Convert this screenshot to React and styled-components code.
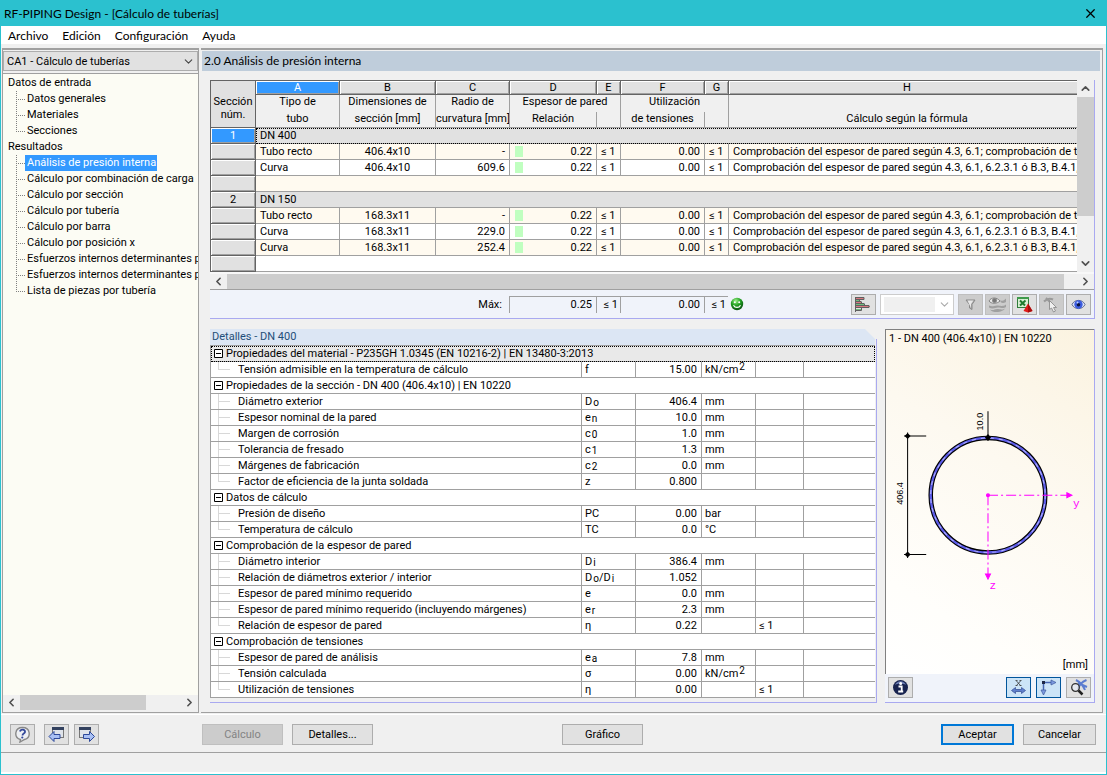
import React from "react";
import styled, { createGlobalStyle, css } from "styled-components";
import { ChevronDown, ChevronLeft, ChevronRight, ChevronUp, X } from "lucide-react";

const GlobalStyle = createGlobalStyle`
  * {
    box-sizing: border-box;
  }
  body {
    margin: 0;
    background: #f0f0f0;
    color: #000;
    font-family: "Roboto", "Liberation Sans", sans-serif;
    font-size: 11px;
  }
  button, select {
    font: inherit;
    color: inherit;
  }
`;

const captionFont = css`
  font-family: "Lato", "Noto Sans", sans-serif;
  font-size: 12px;
  font-weight: 400;
`;

/* ---------- window ---------- */

const Window = styled.div`
  min-height: 100vh;
  display: flex;
  flex-direction: column;
  border: 1px solid #2bc1cf;
  background: #f0f0f0;
`;

const TitleBar = styled.header`
  height: 25px;
  display: flex;
  align-items: center;
  justify-content: space-between;
  padding: 0 8px 0 3px;
  background: #2bc1cf;
  h1 {
    ${captionFont}
    margin: 0;
  }
  button {
    display: flex;
    padding: 0;
    border: 0;
    background: none;
  }
`;

const MenuBar = styled.nav`
  ${captionFont}
  height: 18px;
  display: flex;
  align-items: center;
  gap: 14px;
  padding: 2px 0 0 7px;
  background: #fff;
  button {
    padding: 0;
    border: 0;
    background: none;
    line-height: 16px;
  }
`;

const Main = styled.main`
  flex: 1;
  display: grid;
  grid-template-columns: 197px minmax(0, 1fr);
  gap: 2px;
  padding: 4px 3px 1px 1px;
`;

/* ---------- navigator ---------- */

const Sidebar = styled.aside`
  display: flex;
  flex-direction: column;
  min-width: 0;
  padding-bottom: 2px;
  border: 1px solid #a0a0a0;
  border-top-width: 2px;
  background: #f0f0f0;
`;

const CaseSelect = styled.div`
  position: relative;
  margin-top: 1px;
  padding-bottom: 2px;
  border-bottom: 1px solid #a0a0a0;
  select {
    display: block;
    width: 100%;
    height: 20px;
    padding: 0 20px 0 3px;
    border: 1px solid #adadad;
    border-radius: 0;
    background: #e1e1e1;
    appearance: none;
  }
  svg {
    position: absolute;
    right: 3px;
    top: 4px;
    pointer-events: none;
  }
`;

const Tree = styled.ul`
  flex: 1;
  margin: 0;
  padding: 1px 0 0;
  overflow: hidden;
  list-style: none;
  background: #fcfcf4;
`;

const TreeRow = styled.li`
  height: 16px;
  display: flex;
  align-items: center;
  padding-left: ${(p) => (p.$root ? 3 : 13)}px;
  white-space: nowrap;
  a {
    padding: 0 1px 0 2px;
    line-height: 16px;
    color: ${(p) => (p.$active ? "#fff" : "#000")};
    background: ${(p) => (p.$active ? "#3399ff" : "none")};
    text-decoration: none;
  }
`;

const Branch = styled.span`
  flex: none;
  align-self: flex-start;
  width: 9px;
  height: ${(p) => (p.$last ? 9 : 16)}px;
  background:
    repeating-linear-gradient(90deg, #808080 0 1px, transparent 1px 2px) 0 8px / 100% 1px no-repeat,
    repeating-linear-gradient(180deg, #808080 0 1px, transparent 1px 2px) 0 0 / 1px 100% no-repeat;
`;

/* ---------- scroll bars ---------- */

const ScrollBar = styled.div`
  flex: none;
  display: flex;
  flex-direction: ${(p) => (p.$vertical ? "column" : "row")};
  ${(p) => (p.$vertical ? "width: 17px;" : "height: 15px;")}
  background: #f0f0f0;
  button {
    flex: none;
    width: 17px;
    height: ${(p) => (p.$vertical ? 17 : 15)}px;
    display: flex;
    align-items: center;
    justify-content: center;
    padding: 0;
    border: 0;
    background: none;
    color: #505050;
  }
`;

const Track = styled.div`
  flex: 1;
  display: flex;
  flex-direction: ${(p) => (p.$vertical ? "column" : "row")};
`;

const Thumb = styled.div`
  flex: 0 0 ${(p) => p.$size};
  background: #cdcdcd;
`;

/* ---------- work area ---------- */

const Panel = styled.section`
  display: flex;
  flex-direction: column;
  min-width: 0;
  border: solid #a0a0a0;
  border-width: 2px 1px 1px 0;
`;

const PanelTitle = styled.h2`
  ${captionFont}
  height: 20px;
  margin: 1px 2px 0 1px;
  padding-left: 2px;
  background: #bfcddb;
  line-height: 20px;
`;

const Content = styled.div`
  flex: 1;
  display: flex;
  flex-direction: column;
  gap: 10px;
  padding: 9px 7px 9px 9px;
`;

const Results = styled.div`
  border: solid #a9a9f0;
  border-width: 0 1px 1px 0;
`;

const ResultsTop = styled.div`
  display: flex;
  padding-bottom: 2px;
  background: #f8f8f8;
`;

const GridView = styled.div`
  flex: 1;
  min-width: 0;
  overflow: hidden;
  border: solid #646464;
  border-width: 1px 0 0 1px;
`;

const Grid = styled.table`
  width: calc(100% + 9px);
  table-layout: fixed;
  border-collapse: separate;
  border-spacing: 0;
  background: #fff;
  th, td {
    height: 16px;
    padding: 0 4px;
    border: solid #a0a0a0;
    border-width: 0 1px 1px 0;
    font-weight: 400;
    line-height: 15px;
    white-space: nowrap;
    overflow: hidden;
  }
`;

const raised = css`
  border-color: #646464 !important;
  box-shadow: inset 1px 1px #fff, inset -1px -1px #a0a0a0;
  background: #e1e1e1;
`;

const Letter = styled.th`
  ${raised}
  height: 14px !important;
  line-height: 13px !important;
  ${(p) =>
    p.$active &&
    css`
      background: #3399ff;
      color: #fff;
    `}
`;

const Corner = styled.th`
  background: #e1e1e1;
  border-color: #646464 !important;
  padding: 8px 0 0 !important;
  line-height: 13px !important;
  white-space: normal !important;
`;

const Head = styled.th`
  padding: 0 !important;
  background: #f0f0f0;
  vertical-align: top;
  height: ${(p) => (p.$upper ? 17 : 16)}px !important;
  line-height: 14px !important;
  ${(p) => p.$upper && "border-bottom: 0 !important;"}
`;

const RowHead = styled.th`
  ${raised}
  ${(p) =>
    p.$active &&
    css`
      background: #3399ff;
      color: #fff;
    `}
`;

const Cell = styled.td`
  text-align: ${(p) => p.$align || "left"};
  background: ${(p) => (p.$alt ? "#fffaf0" : "#fff")};
`;

const SectionCell = styled.td`
  background: #e1e1e1;
  ${(p) => p.$focus && "outline: 1px dotted #000; outline-offset: -1px;"}
`;

const Ratio = styled.span`
  display: flex;
  align-items: center;
  justify-content: space-between;
  padding-left: 1px;
  &::before {
    content: "";
    width: 8px;
    height: 11px;
    background: #c0ffc0;
  }
`;

const ResultsBar = styled.div`
  height: 29px;
  display: flex;
  align-items: center;
  justify-content: space-between;
  padding-right: 3px;
  border-top: 1px solid #a0a0a0;
  background: #f0f3fa;
`;

const MaxLine = styled.div`
  display: flex;
  align-items: center;
  span {
    width: 293px;
    text-align: right;
    padding-right: 1px;
    margin-right: 6px;
  }
  svg {
    margin-left: 2px;
  }
`;

const MaxBox = styled.output`
  width: ${(p) => p.$width}px;
  height: 17px;
  padding-right: ${(p) => (p.$width > 30 ? 4 : 2)}px;
  border: solid #a0a0a0;
  border-width: 1px 0 0 1px;
  text-align: right;
  line-height: 16px;
`;

const Tools = styled.div`
  display: flex;
  gap: 2px;
`;

const IconButton = styled.button`
  width: 25px;
  height: 21px;
  display: flex;
  align-items: center;
  justify-content: center;
  padding: 0;
  border: 1px solid ${(p) => (p.$pressed ? "#00559b" : "#adadad")};
  background: ${(p) => (p.$pressed ? "#cce4f7" : "#e1e1e1")};
  &:disabled {
    border-color: #bfbfbf;
    background: #cccccc;
  }
`;

const RangeSelect = styled.div`
  position: relative;
  margin: 0 2px;
  select {
    display: block;
    width: 74px;
    height: 21px;
    border: 1px solid #ccc;
    border-radius: 0;
    background: linear-gradient(#f0f0f0, #f0f0f0) 3px 2px / 51px 15px no-repeat #fff;
    appearance: none;
    opacity: 1;
  }
  svg {
    position: absolute;
    right: 3px;
    top: 4px;
    pointer-events: none;
  }
`;

/* ---------- details ---------- */

const Lower = styled.div`
  flex: 1;
  display: grid;
  grid-template-columns: minmax(0, 1fr) 210px;
  gap: 8px;
`;

const Details = styled.div`
  padding-right: 2px;
  border-bottom: 1px solid #a9a9f0;
  background: linear-gradient(#a9a9f0, #a9a9f0) right bottom / 1px calc(100% - 10px) no-repeat;
`;

const DetailsTitle = styled.h3`
  height: 16px;
  margin: 0;
  padding-left: 2px;
  background: #dce6f4;
  clip-path: polygon(0 0, calc(100% - 10px) 0, 100% 10px, 100% 100%, 0 100%);
  color: #1f4e79;
  font-size: 11px;
  font-weight: 400;
  line-height: 16px;
`;

const DetailTable = styled.table`
  width: 100%;
  table-layout: fixed;
  border-collapse: separate;
  border-spacing: 0;
  border: solid #a0a0a0;
  border-width: 1px 0 0 1px;
  background: #fff;
  th, td {
    height: 16px;
    padding: 0 4px 0 3px;
    border: solid #a0a0a0;
    border-width: 0 1px 1px 0;
    font-weight: 400;
    text-align: left;
    line-height: 13px;
    white-space: nowrap;
    overflow: hidden;
  }
  th:last-child, td:last-child {
    border-right: 0;
  }
  sub, sup {
    font-size: 10px;
    line-height: 0;
    margin-left: 1px;
  }
  sub {
    vertical-align: -1px;
  }
  sup {
    vertical-align: 3px;
  }
`;

const GroupHead = styled.th`
  ${(p) => p.$focus && "background: #e9e9e9; outline: 1px dotted #000; outline-offset: -1px;"}
  button {
    display: flex;
    align-items: center;
    gap: 3px;
    padding: 0;
    border: 0;
    background: none;
  }
`;

const NameCell = styled.th`
  div {
    display: flex;
    align-items: center;
    padding-left: 4px;
    gap: 8px;
  }
`;

const Twig = styled.span`
  width: 12px;
  height: 15px;
  background:
    linear-gradient(#d8d8d8, #d8d8d8) 0 7px / 12px 1px no-repeat,
    linear-gradient(#d8d8d8, #d8d8d8) 0 0 / 1px ${(p) => (p.$last ? "8px" : "100%")} no-repeat;
`;

const NumCell = styled.td`
  text-align: right !important;
`;

/* ---------- preview ---------- */

const Preview = styled.figure`
  display: flex;
  flex-direction: column;
  margin: 0;
  border: solid #a9a9f0;
  border-width: 0 1px 1px 0;
`;

const Drawing = styled.div`
  flex: 1;
  display: flex;
  flex-direction: column;
  border: solid #808080;
  border-width: 1px 0 0 1px;
  background: linear-gradient(212deg, #fbf3e0 0%, #fdf9f0 40%, #fffefb 80%, #fff 100%);
  figcaption {
    padding-left: 3px;
    line-height: 17px;
  }
  svg {
    flex: 1;
    width: 100%;
  }
  p {
    margin: 0;
    padding-right: 6px;
    text-align: right;
    line-height: 18px;
  }
`;

const PreviewBar = styled.div`
  height: 28px;
  display: flex;
  align-items: center;
  gap: 5px;
  padding: 0 3px 1px;
  background: #f0f3fa;
  button:first-child {
    margin-right: auto;
  }
`;

/* ---------- footer ---------- */

const Footer = styled.footer`
  height: 39px;
  display: flex;
  align-items: center;
  padding: 2px 10px 0 9px;
  border-top: 1px solid #fff;
  border-bottom: 1px solid #a0a0a0;
`;

const NavButtons = styled.div`
  width: 192px;
  display: flex;
  gap: 5px;
  button:first-child {
    margin-right: 4px;
  }
`;

const Push = styled.button`
  width: ${(p) => (p.$wide ? 81 : 73)}px;
  height: 21px;
  margin-left: ${(p) => (p.$spaced ? 9 : 0)}px;
  padding: 0;
  border: ${(p) => (p.$primary ? "2px solid #0078d7" : "1px solid #adadad")};
  background: #e1e1e1;
  &:disabled {
    border-color: #bfbfbf;
    background: #ccc;
    color: #838383;
  }
`;

const Spacer = styled.div`
  flex: ${(p) => p.$grow};
`;

const StatusBar = styled.div`
  height: 21px;
  border-bottom: 2px solid #fff;
`;

/* ---------- icons ---------- */

const BarsIcon = () => (
  <svg width="19" height="17" viewBox="0 0 19 17">
    <g strokeWidth="1">
      <path d="M2 2.500h8M2 6.500h5M2 10.500h14" stroke="#d87880" />
      <path d="M2 4.500h3M2 8.500h8M2 13.500h5" stroke="#6fc07c" />
      <path d="M1.500 1v15M2 1.500h8v2M5.500 3.500v2M7.500 5.500v2M10.500 7.500v2M2 3.500h8M2 5.500h5M2 7.500h8M2 9.500h8M10 9.500h5v2H2M2 14.500h5.500v-3" stroke="#606060" fill="none" />
    </g>
  </svg>
);

const FilterIcon = () => (
  <svg width="15" height="15" viewBox="0 0 15 15">
    <path d="M3 3h9L9 7.500v5L6.500 11V7.500z" fill="#a8a8a8" stroke="#8a8a8a" />
    <path d="M4.500 3.500h6L8 7v4z" fill="#e8e8e8" />
  </svg>
);

const EyeWavesIcon = () => (
  <svg width="19" height="17" viewBox="0 0 19 17" fill="none" stroke="#858585">
    <path d="M1 9.500c4 2 5-.5 9 0s5 1 8-1V11c-3 2-5 .5-8 .5s-5 2-9 0z" fill="#a0a0a0" stroke="none" />
    <path d="M2 13.500c4 1.500 4-.8 8-.5s4 1 7-.5c-2 4-12 5-15 1z" fill="#a0a0a0" stroke="none" />
    <path d="M12.500 4c2 2 4 0 5.500-1.500V6C15 7.500 14 7 12.500 6z" fill="#a0a0a0" stroke="none" />
    <path d="M1 5C3 1 9 1 12 5 9 8 3 8 1 5z" fill="#e8e8e8" />
    <circle cx="6.500" cy="4.500" r="2" fill="#777" />
  </svg>
);

const ExcelIcon = () => (
  <svg width="19" height="19" viewBox="0 0 19 19">
    <rect x="2.500" y="2.500" width="11" height="10" fill="#d8efd4" stroke="#2f7d3b" />
    <path d="M2 2h12v2H2z" fill="#3f9a4b" />
    <path d="M5 5.500l5 5M10.500 5.500l-5.500 5" stroke="#1f7a2f" strokeWidth="2" />
    <path d="M13 8.500l4.500 7.500L13 17.500 8.500 16z" fill="#e01b1b" />
    <path d="M13 8.500l4.500 7.500L13 17.500z" fill="#a80d0d" />
  </svg>
);

const PickIcon = () => (
  <svg width="17" height="17" viewBox="0 0 17 17">
    <path d="M1 5.500c3-3 6-3.500 9-2M3 2l5 5" stroke="#9a9a9a" strokeWidth="2" fill="none" />
    <path d="M6.500 4.500v9l2-1.500 2 4 2-1-2-3.500h3z" fill="#f0f0f0" stroke="#8c8c8c" strokeWidth="0.900" />
  </svg>
);

const EyeIcon = () => (
  <svg width="17" height="13" viewBox="0 0 17 13">
    <path d="M2 6.500C4.500 1 12.500 1 15 6.500 12.500 12 4.500 12 2 6.500z" fill="#e4eafa" stroke="#5a658a" />
    <circle cx="8.500" cy="6.500" r="4.200" fill="#3c5ce0" />
    <circle cx="8.500" cy="6.800" r="1.800" fill="#0a1440" />
    <circle cx="7.500" cy="4.600" r="1" fill="#bcd0ff" />
  </svg>
);

const SmileIcon = () => (
  <svg width="14" height="14" viewBox="0 0 14 14">
    <defs>
      <radialGradient id="smile" cx="0.400" cy="0.250" r="0.750">
        <stop offset="0" stopColor="#9df08a" />
        <stop offset="0.500" stopColor="#22a022" />
        <stop offset="1" stopColor="#0a5210" />
      </radialGradient>
    </defs>
    <circle cx="7" cy="7" r="6.200" fill="url(#smile)" />
    <circle cx="4.800" cy="5.200" r="1" fill="#fff" />
    <circle cx="9.200" cy="5.200" r="1" fill="#fff" />
    <path d="M3.500 8.200c1.500 3 5.500 3 7 0" fill="none" stroke="#fff" strokeWidth="1.200" />
  </svg>
);

const InfoIcon = () => (
  <svg width="17" height="17" viewBox="0 0 17 17">
    <circle cx="8.500" cy="8.500" r="7.500" fill="#17234f" />
    <path d="M3 6c2-5 9-5 11 0-3-2-8-2-11 0z" fill="#6b7db4" />
    <circle cx="8.700" cy="4.500" r="1.500" fill="#fff" />
    <path d="M6.500 7.500h3.200v5M6.200 12.500h5" stroke="#fff" strokeWidth="1.800" fill="none" />
  </svg>
);

const DimXIcon = () => (
  <svg width="17" height="17" viewBox="0 0 17 17">
    <path d="M6.500 2l4 4.500M10.500 2l-4 4.500M5.500 1.500h2M9.500 1.500h2M5.500 6.500h2M9.500 6.500h2" stroke="#333" strokeWidth="0.800" />
    <path d="M1.500 11.500l4-3v2h6v-2l4 3-4 3v-2h-6v2z" fill="#5f80cd" stroke="#3c579c" strokeWidth="0.800" />
  </svg>
);

const AxesIcon = () => (
  <svg width="17" height="17" viewBox="0 0 17 17">
    <path d="M4 3.500h9M3.500 3v10" stroke="#4767b4" strokeWidth="1.500" />
    <path d="M11 1l5 2.500L11 6zM1 11l2.500 5L6 11z" fill="#7d9be0" stroke="#3c579c" strokeWidth="0.700" />
    <rect x="2" y="2" width="3" height="3" fill="#1c2746" />
  </svg>
);

const ZoomIcon = () => (
  <svg width="18" height="17" viewBox="0 0 18 17">
    <path d="M6 1c4 2 7 5 9 10M16.500 1C12 3 9 6 8 10M8 4l9 4" stroke="#5b7cd0" strokeWidth="2" fill="none" />
    <circle cx="5.500" cy="8.500" r="3.800" fill="#e8ecf4" fillOpacity="0.800" stroke="#333" strokeWidth="1.300" />
    <path d="M8.500 11.500l4 4" stroke="#222" strokeWidth="2.500" />
  </svg>
);

const HelpIcon = () => (
  <svg width="17" height="17" viewBox="0 0 17 17">
    <path d="M8.500 1.500c8 0 9 10 2 12L6 16l.5-2.500c-7-2-6-12 2-12z" fill="#eef0f4" stroke="#888" strokeWidth="1.400" />
    <path d="M6 5.500c.5-2.500 5.500-2.500 5 .5-.3 1.700-2.500 1.500-2.500 3.500" fill="none" stroke="#33489a" strokeWidth="1.800" />
    <circle cx="8.300" cy="11.500" r="1.100" fill="#33489a" />
  </svg>
);

const StepIcon = ({ back }) => (
  <svg width="18" height="17" viewBox="0 0 18 17">
    <rect x={back ? 4.5 : 1.5} y="1.500" width="11" height="10" fill="#dfe3ea" stroke="#777" />
    <path d={back ? "M4 1h12v3H4z" : "M1 1h12v3H1z"} fill="#33415f" />
    <path
      d={back ? "M1 10.500l5-5v3h6v4H6v3z" : "M16.500 10.500l-5-5v3h-6v4h6v3z"}
      fill="#a9c0f4"
      stroke="#2d489a"
    />
  </svg>
);

const BoxMinus = () => (
  <svg width="9" height="9" viewBox="0 0 9 9">
    <path d="M.5.5h8v8h-8zM2 4.500h5" fill="#fff" stroke="#000" />
  </svg>
);

const PipeDrawing = () => (
  <svg viewBox="886 347 207 308" fontFamily="Liberation Sans, sans-serif" fontSize="9">
    <circle cx="987.500" cy="494.500" r="57" fill="none" stroke="#000" strokeWidth="4.500" />
    <circle cx="987.500" cy="494.500" r="57" fill="none" stroke="#5c5ce8" strokeWidth="2.300" />
    <circle cx="987.500" cy="494.500" r="57" fill="none" stroke="#b4b4ff" strokeWidth="1" strokeDasharray="4 5" />
    <path d="M907.500 432v125M904 435.500h22M904 553.500h22M987.500 411v29" stroke="#000" />
    <path d="M907.500 432.500l3 3-3 3-3-3zM907.500 550.500l3 3-3 3-3-3zM987.500 433.500l3 3.500-3 3.500-3-3.500z" />
    <text transform="translate(903 504) rotate(-90)">406.4</text>
    <text transform="translate(983 430) rotate(-90)">10.0</text>
    <g stroke="#f0f" fill="#f0f">
      <path d="M987.500 494.500h79M987.500 494.500v80" strokeDasharray="10 3 2 3" />
      <path d="M1066 492l5 2.500-5 2.500zM985 573h5l-2.500 5z" />
      <circle cx="987.500" cy="494.500" r="1.500" />
    </g>
    <g fill="#f0f" fontFamily="Liberation Mono, monospace" fontSize="11">
      <text x="1072" y="506">y</text>
      <text x="989" y="588">z</text>
    </g>
  </svg>
);

/* ---------- data ---------- */

const navigation = [
  { label: "Datos de entrada", items: ["Datos generales", "Materiales", "Secciones"] },
  {
    label: "Resultados",
    items: [
      "Análisis de presión interna",
      "Cálculo por combinación de carga",
      "Cálculo por sección",
      "Cálculo por tubería",
      "Cálculo por barra",
      "Cálculo por posición x",
      "Esfuerzos internos determinantes p",
      "Esfuerzos internos determinantes p",
      "Lista de piezas por tubería",
    ],
  },
];

const straight = "Comprobación del espesor de pared según 4.3, 6.1; comprobación de ter";
const bend = "Comprobación del espesor de pared según 4.3, 6.1, 6.2.3.1 ó B.3, B.4.1,";

const rows = [
  { no: 1, section: "DN 400" },
  { type: "Tubo recto", size: "406.4x10", radius: "-", formula: straight, alt: true },
  { type: "Curva", size: "406.4x10", radius: "609.6", formula: bend },
  { empty: true, alt: true },
  { no: 2, section: "DN 150" },
  { type: "Tubo recto", size: "168.3x11", radius: "-", formula: straight, alt: true },
  { type: "Curva", size: "168.3x11", radius: "229.0", formula: bend },
  { type: "Curva", size: "168.3x11", radius: "252.4", formula: bend, alt: true },
  { empty: true },
];

const sub = (a, b) => (
  <>
    {a}
    <sub>{b}</sub>
  </>
);

const stress = (
  <>
    kN/cm<sup>2</sup>
  </>
);

const details = [
  {
    title: "Propiedades del material - P235GH 1.0345 (EN 10216-2) | EN 13480-3:2013",
    rows: [["Tensión admisible en la temperatura de cálculo", "f", "15.00", stress]],
  },
  {
    title: "Propiedades de la sección - DN 400 (406.4x10) | EN 10220",
    rows: [
      ["Diámetro exterior", sub("D", "o"), "406.4", "mm"],
      ["Espesor nominal de la pared", sub("e", "n"), "10.0", "mm"],
      ["Margen de corrosión", sub("c", "0"), "1.0", "mm"],
      ["Tolerancia de fresado", sub("c", "1"), "1.3", "mm"],
      ["Márgenes de fabricación", sub("c", "2"), "0.0", "mm"],
      ["Factor de eficiencia de la junta soldada", "z", "0.800"],
    ],
  },
  {
    title: "Datos de cálculo",
    rows: [
      ["Presión de diseño", "PC", "0.00", "bar"],
      ["Temperatura de cálculo", "TC", "0.0", "°C"],
    ],
  },
  {
    title: "Comprobación de la espesor de pared",
    rows: [
      ["Diámetro interior", sub("D", "i"), "386.4", "mm"],
      ["Relación de diámetros exterior / interior", <>{sub("D", "o")}/{sub("D", "i")}</>, "1.052"],
      ["Espesor de pared mínimo requerido", "e", "0.0", "mm"],
      ["Espesor de pared mínimo requerido (incluyendo márgenes)", sub("e", "r"), "2.3", "mm"],
      ["Relación de espesor de pared", "η", "0.22", "", "≤ 1"],
    ],
  },
  {
    title: "Comprobación de tensiones",
    rows: [
      ["Espesor de pared de análisis", sub("e", "a"), "7.8", "mm"],
      ["Tensión calculada", "σ", "0.00", stress],
      ["Utilización de tensiones", "η", "0.00", "", "≤ 1"],
    ],
  },
];

/* ---------- parts ---------- */

const arrow = { size: 13, strokeWidth: 3 };

const Navigator = () => (
  <Sidebar>
    <CaseSelect>
      <select aria-label="Caso">
        <option>CA1 - Cálculo de tuberías</option>
      </select>
      <ChevronDown size={13} strokeWidth={2} color="#444" />
    </CaseSelect>
    <Tree>
      {navigation.map((group) => (
        <React.Fragment key={group.label}>
          <TreeRow $root>
            <a href="#grupo">{group.label}</a>
          </TreeRow>
          {group.items.map((item, i) => (
            <TreeRow key={i} $active={item === "Análisis de presión interna"}>
              <Branch $last={i === group.items.length - 1} />
              <a href="#tabla">{item}</a>
            </TreeRow>
          ))}
        </React.Fragment>
      ))}
    </Tree>
    <ScrollBar>
      <button aria-label="Izquierda">
        <ChevronLeft {...arrow} />
      </button>
      <Track>
        <Thumb $size="78%" />
      </Track>
      <button aria-label="Derecha">
        <ChevronRight {...arrow} />
      </button>
    </ScrollBar>
  </Sidebar>
);

const ResultGrid = () => (
  <Grid>
    <colgroup>
      {[45, 84, 96, 74, 87, 24, 84, 24].map((w, i) => (
        <col key={i} width={w} />
      ))}
      <col />
    </colgroup>
    <thead>
      <tr>
        <Corner rowSpan={3}>Sección núm.</Corner>
        {"ABCDEFGH".split("").map((l) => (
          <Letter key={l} $active={l === "A"}>
            {l}
          </Letter>
        ))}
      </tr>
      <tr>
        <Head $upper>Tipo de</Head>
        <Head $upper>Dimensiones de</Head>
        <Head $upper>Radio de</Head>
        <Head $upper colSpan={2}>Espesor de pared</Head>
        <Head $upper colSpan={2}>Utilización</Head>
        <Head $upper />
      </tr>
      <tr>
        <Head>tubo</Head>
        <Head>sección [mm]</Head>
        <Head>curvatura [mm]</Head>
        <Head>Relación</Head>
        <Head />
        <Head>de tensiones</Head>
        <Head />
        <Head>Cálculo según la fórmula</Head>
      </tr>
    </thead>
    <tbody>
      {rows.map((row, i) => (
        <tr key={i}>
          <RowHead $active={row.no === 1}>{row.no}</RowHead>
          {row.section && (
            <SectionCell colSpan={8} $focus={row.no === 1}>
              {row.section}
            </SectionCell>
          )}
          {row.empty && <Cell colSpan={8} $alt={row.alt} />}
          {row.type && (
            <>
              <Cell $alt={row.alt}>{row.type}</Cell>
              <Cell $alt={row.alt} $align="center">{row.size}</Cell>
              <Cell $alt={row.alt} $align="right">{row.radius}</Cell>
              <Cell $alt={row.alt}>
                <Ratio>0.22</Ratio>
              </Cell>
              <Cell $alt={row.alt}>≤ 1</Cell>
              <Cell $alt={row.alt} $align="right">0.00</Cell>
              <Cell $alt={row.alt}>≤ 1</Cell>
              <Cell $alt={row.alt}>{row.formula}</Cell>
            </>
          )}
        </tr>
      ))}
    </tbody>
  </Grid>
);

const ResultTools = () => (
  <ResultsBar>
    <MaxLine>
      <span>Máx:</span>
      <MaxBox $width={87}>0.25</MaxBox>
      <MaxBox $width={24}>≤ 1</MaxBox>
      <MaxBox $width={84}>0.00</MaxBox>
      <MaxBox $width={24}>≤ 1</MaxBox>
      <SmileIcon />
    </MaxLine>
    <Tools>
      <IconButton aria-label="Barras"><BarsIcon /></IconButton>
      <RangeSelect>
        <select aria-label="Rango" disabled />
        <ChevronDown size={13} strokeWidth={2} color="#aaa" />
      </RangeSelect>
      <IconButton disabled aria-label="Filtro"><FilterIcon /></IconButton>
      <IconButton disabled aria-label="Vista"><EyeWavesIcon /></IconButton>
      <IconButton aria-label="Exportar"><ExcelIcon /></IconButton>
      <IconButton disabled aria-label="Seleccionar"><PickIcon /></IconButton>
      <IconButton aria-label="Ver"><EyeIcon /></IconButton>
    </Tools>
  </ResultsBar>
);

const DetailGrid = () => (
  <DetailTable>
    <colgroup>
      <col />
      {[54, 66, 54, 48, 71].map((w, i) => (
        <col key={i} width={w} />
      ))}
    </colgroup>
    {details.map((group, g) => (
      <tbody key={group.title}>
        <tr>
          <GroupHead colSpan={6} $focus={g === 0}>
            <button>
              <BoxMinus />
              {group.title}
            </button>
          </GroupHead>
        </tr>
        {group.rows.map(([name, symbol, value, unit, limit], i) => (
          <tr key={name}>
            <NameCell>
              <div>
                <Twig $last={i === group.rows.length - 1} />
                {name}
              </div>
            </NameCell>
            <td>{symbol}</td>
            <NumCell>{value}</NumCell>
            <td>{unit}</td>
            <td>{limit}</td>
            <td />
          </tr>
        ))}
      </tbody>
    ))}
  </DetailTable>
);

const App = () => (
  <>
    <GlobalStyle />
    <Window>
      <TitleBar>
        <h1>RF-PIPING Design - [Cálculo de tuberías]</h1>
        <button aria-label="Cerrar">
          <X size={15} strokeWidth={2} />
        </button>
      </TitleBar>
      <MenuBar>
        <button>Archivo</button>
        <button>Edición</button>
        <button>Configuración</button>
        <button>Ayuda</button>
      </MenuBar>
      <Main>
        <Navigator />
        <Panel>
          <PanelTitle>2.0 Análisis de presión interna</PanelTitle>
          <Content>
            <Results>
              <ResultsTop>
                <GridView>
                  <ResultGrid />
                </GridView>
                <ScrollBar $vertical>
                  <button aria-label="Arriba">
                    <ChevronUp {...arrow} />
                  </button>
                  <Track $vertical>
                    <Thumb $size="75%" />
                  </Track>
                  <button aria-label="Abajo">
                    <ChevronDown {...arrow} />
                  </button>
                </ScrollBar>
              </ResultsTop>
              <ScrollBar>
                <button aria-label="Izquierda">
                  <ChevronLeft {...arrow} />
                </button>
                <Track>
                  <Thumb $size="98.500%" />
                </Track>
                <button aria-label="Derecha">
                  <ChevronRight {...arrow} />
                </button>
              </ScrollBar>
              <ResultTools />
            </Results>
            <Lower>
              <Details>
                <DetailsTitle>Detalles - DN 400</DetailsTitle>
                <DetailGrid />
              </Details>
              <Preview>
                <Drawing>
                  <figcaption>1 - DN 400 (406.4x10) | EN 10220</figcaption>
                  <PipeDrawing />
                  <p>[mm]</p>
                </Drawing>
                <PreviewBar>
                  <IconButton aria-label="Información"><InfoIcon /></IconButton>
                  <IconButton $pressed aria-label="Cotas"><DimXIcon /></IconButton>
                  <IconButton $pressed aria-label="Ejes"><AxesIcon /></IconButton>
                  <IconButton aria-label="Zoom"><ZoomIcon /></IconButton>
                </PreviewBar>
              </Preview>
            </Lower>
          </Content>
        </Panel>
      </Main>
      <Footer>
        <NavButtons>
          <IconButton aria-label="Ayuda"><HelpIcon /></IconButton>
          <IconButton aria-label="Anterior"><StepIcon back /></IconButton>
          <IconButton aria-label="Siguiente"><StepIcon /></IconButton>
        </NavButtons>
        <Push $wide disabled>Cálculo</Push>
        <Push $wide $spaced>Detalles...</Push>
        <Spacer $grow={189} />
        <Push $wide>Gráfico</Push>
        <Spacer $grow={298} />
        <Push $primary>Aceptar</Push>
        <Push $spaced>Cancelar</Push>
      </Footer>
      <StatusBar />
    </Window>
  </>
);

export default App;
